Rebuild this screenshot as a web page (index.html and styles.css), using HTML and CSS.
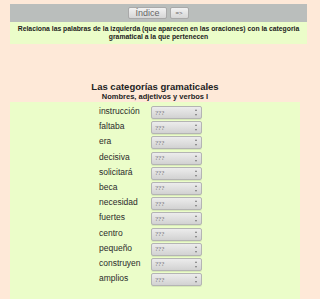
FILE: index.html
```html
<!DOCTYPE html>
<html lang="es">
<head>
  <meta charset="UTF-8" />
  <title>Las categorías gramaticales</title>
  <link rel="stylesheet" href="styles.css">
</head>
<body>
  <div class="nav-bar">
    <button class="nav-btn">Índice</button>
    <button class="nav-btn small">=&gt;</button>
  </div>
  <div class="intro">Relaciona las palabras de la izquierda (que aparecen en las oraciones) con la categoria gramatical a la que pertenecen</div>

  <div class="heading">
    <h1>Las categorías gramaticales</h1>
    <h2>Nombres, adjetivos y verbos I</h2>
  </div>

  <div class="panel">
    <div class="word-list">
      <span class="word">instrucción</span><span class="cat-box"><select class="cat"><option>???</option></select></span>
      <span class="word">faltaba</span><span class="cat-box"><select class="cat"><option>???</option></select></span>
      <span class="word">era</span><span class="cat-box"><select class="cat"><option>???</option></select></span>
      <span class="word">decisiva</span><span class="cat-box"><select class="cat"><option>???</option></select></span>
      <span class="word">solicitará</span><span class="cat-box"><select class="cat"><option>???</option></select></span>
      <span class="word">beca</span><span class="cat-box"><select class="cat"><option>???</option></select></span>
      <span class="word">necesidad</span><span class="cat-box"><select class="cat"><option>???</option></select></span>
      <span class="word">fuertes</span><span class="cat-box"><select class="cat"><option>???</option></select></span>
      <span class="word">centro</span><span class="cat-box"><select class="cat"><option>???</option></select></span>
      <span class="word">pequeño</span><span class="cat-box"><select class="cat"><option>???</option></select></span>
      <span class="word">construyen</span><span class="cat-box"><select class="cat"><option>???</option></select></span>
      <span class="word">amplios</span><span class="cat-box"><select class="cat"><option>???</option></select></span>
    </div>
  </div>
</body>
</html>
```

FILE: styles.css
```css
body {
  margin: 0;
  padding: 4px 13px 0 10px;
  background: #fee9d8;
  font-family: 'Liberation Sans', Arial, sans-serif;
  color: #222;
}

.nav-bar {
  height: 18px;
  background: #babebc;
  display: flex;
  align-items: center;
  justify-content: center;
  gap: 3px;
}

.nav-btn {
  height: 12px;
  padding: 0 6px;
  font-family: 'Liberation Sans', Arial, sans-serif;
  font-size: 9px;
  line-height: 10px;
  color: #666;
  background: linear-gradient(#f2f2f2, #d6d6d6);
  border: 1px solid #a9a9a9;
  border-radius: 2px;
}

.nav-btn.small {
  font-size: 6px;
  padding: 0 5px;
}

.intro {
  height: 22px;
  box-sizing: border-box;
  padding: 3px 2px;
  background: #ebfdc9;
  font-size: 6.8px;
  font-weight: bold;
  line-height: 8px;
  text-align: center;
  color: #1c1c1c;
}

.heading {
  width: 290px;
  margin-top: 37px;
  text-align: center;
}

.heading h1 {
  margin: 0;
  font-size: 9.5px;
  line-height: 11px;
}

.heading h2 {
  margin: 0;
  font-size: 7.5px;
  line-height: 9px;
}

.panel {
  width: 290px;
  margin-top: 1px;
  padding: 4px 0 20px;
  background: #ebfdc9;
}

.word-list {
  display: grid;
  grid-template-columns: 52px 51px;
  row-gap: 2.2px;
  padding-left: 89px;
}

.word {
  font-size: 8.5px;
  line-height: 10px;
  color: #2a2a2a;
}

.cat-box {
  position: relative;
  height: 13px;
}

/* up / down arrows of the select */
.cat-box::before,
.cat-box::after {
  content: '';
  position: absolute;
  right: 5px;
  border-left: 1.5px solid transparent;
  border-right: 1.5px solid transparent;
  pointer-events: none;
}

.cat-box::before {
  top: 3px;
  border-bottom: 2px solid #777;
}

.cat-box::after {
  bottom: 3px;
  border-top: 2px solid #777;
}

.cat {
  appearance: none;
  display: block;
  width: 51px;
  height: 13px;
  padding: 0 3px;
  font-family: 'Liberation Serif', serif;
  font-size: 7px;
  color: #777;
  background: linear-gradient(#ececec, #d2d2d2);
  border: 1px solid #b4b4b4;
  border-radius: 2px;
  box-shadow: 0 1px 0 rgba(0, 0, 0, 0.08);
}
```
